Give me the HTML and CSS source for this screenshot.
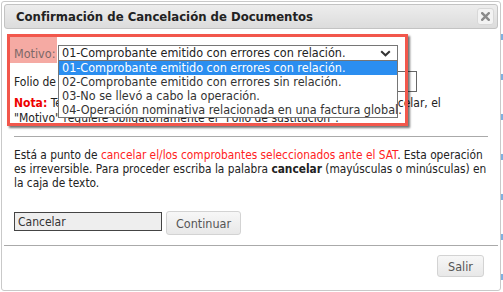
FILE: index.html
```html
<!DOCTYPE html>
<html lang="es">
<head>
<meta charset="utf-8">
<title>Confirmación de Cancelación de Documentos</title>
<link rel="stylesheet" href="styles.css">
</head>
<body>
<div class="dialog">
  <div class="titlebar">
    <span class="title">Confirmación de Cancelación de Documentos</span>
    <button class="close" type="button" aria-label="Cerrar">
      <svg width="9" height="9" viewBox="0 0 9 9"><path d="M1.2 1.2 L7.8 7.8 M7.8 1.2 L1.2 7.8" stroke="#8a8a8a" stroke-width="2.4" stroke-linecap="square"/></svg>
    </button>
  </div>
  <div class="content">
    <div class="form">
      <div class="row row-motivo">
        <span class="label hl">Motivo:</span>
        <div class="select">
          <span class="select-value">01-Comprobante emitido con errores con relación.</span>
          <svg class="chev" width="11" height="7" viewBox="0 0 11 7"><path d="M1.2 1.2 L5.5 5.3 L9.8 1.2" fill="none" stroke="#333" stroke-width="2"/></svg>
          <ul class="listbox">
            <li class="opt sel">01-Comprobante emitido con errores con relación.</li>
            <li class="opt">02-Comprobante emitido con errores sin relación.</li>
            <li class="opt">03-No se llevó a cabo la operación.</li>
            <li class="opt">04-Operación nominativa relacionada en una factura global.</li>
          </ul>
        </div>
      </div>
      <div class="row row-folio">
        <span class="label">Folio de sustitución:</span>
        <input class="folio" type="text">
      </div>
      <p class="nota"><b>Nota:</b> Tenga en cuenta que al seleccionar el motivo 01 para poder cancelar, el<br>"Motivo" requiere obligatoriamente el "Folio de sustitución".</p>
    </div>
    <hr class="sep">
    <p class="msg">Está a punto de <span class="red">cancelar el/los comprobantes seleccionados ante el SAT</span>. Esta operación es irreversible. Para proceder escriba la palabra <b>cancelar</b> (mayúsculas o minúsculas) en la caja de texto.</p>
    <div class="confirm">
      <input class="word" type="text" value="Cancelar">
      <button class="btn" type="button">Continuar</button>
    </div>
  </div>
  <div class="footer">
    <button class="btn btn-salir" type="button">Salir</button>
  </div>
  <div class="annot"></div>
</div>
</body>
</html>
```
FILE: styles.css
```css
html, body {
  margin: 0;
  padding: 0;
}
body {
  width: 503px;
  height: 292px;
  background-color: #fff;
  background-image: repeating-linear-gradient(to bottom, transparent 0 34px, #7fb0e0 34px 40px);
  background-size: 2px 100%;
  background-position: right top;
  background-repeat: no-repeat;
  font-family: "DejaVu Sans Condensed", "DejaVu Sans", sans-serif;
  font-stretch: condensed;
  color: #222;
  overflow: hidden;
}
.dialog {
  position: relative;
  box-sizing: border-box;
  margin: 1px 0 0 1px;
  width: 500px;
  height: 290px;
  border: 1px solid #c9c9c9;
  border-radius: 3px;
  padding: 2px;
  background: #fff;
  display: flex;
  flex-direction: column;
}
.titlebar {
  box-sizing: border-box;
  height: 25px;
  border: 1px solid #c3c3c3;
  border-radius: 3px;
  background: linear-gradient(to bottom, #ededed, #dcdcdc);
  display: flex;
  align-items: center;
  justify-content: space-between;
  padding: 0 3px 0 11px;
}
.title {
  font-weight: bold;
  font-size: 13px;
  color: #222;
}
.close {
  box-sizing: border-box;
  width: 17px;
  height: 17px;
  padding: 0;
  border: 1px solid #d8d8d8;
  border-radius: 3px;
  background: #f3f3f3;
  display: flex;
  align-items: center;
  justify-content: center;
}
.content {
  padding: 7px 10px 10px 10px;
}
.form {
  font-size: 12px;
}
.row {
  display: flex;
}
.row-motivo {
  height: 27px;
}
.label.hl {
  box-sizing: border-box;
  width: 48px;
  margin-left: -5px;
  padding: 10px 0 0 5px;
  background: #f5aaa3;
  color: #7c6868;
  font-size: 12.5px;
}
.select {
  position: relative;
  box-sizing: border-box;
  align-self: flex-end;
  margin: 0 0 2px 1px;
  width: 340px;
  height: 16px;
  border: 1px solid #767676;
  background: #fff;
  font-size: 12.5px;
  line-height: 14px;
  padding-left: 3px;
  color: #222;
  display: flex;
  align-items: center;
}
.select-value {
  flex: 1;
  white-space: nowrap;
}
.chev {
  margin-right: 6px;
}
.listbox {
  position: absolute;
  z-index: 2;
  left: -1px;
  top: 14px;
  box-sizing: border-box;
  width: 340px;
  margin: 0;
  padding: 0;
  list-style: none;
  border: 1px solid #767676;
  background: #fff;
}
.opt {
  height: 14px;
  line-height: 14px;
  padding-left: 3px;
  color: #333;
  white-space: nowrap;
}
.opt.sel {
  background: #2b8ef0;
  color: #fff;
}
.row-folio {
  align-items: center;
  width: 403px;
  padding: 8px 0 4px;
}
.row-folio .label {
  width: 150px;
  color: #222;
}
.folio {
  flex: 1;
  box-sizing: border-box;
  height: 21px;
  margin: 0;
  border: 1px solid #666;
  background: #fff;
}
.nota {
  margin: 0;
  line-height: 15px;
  color: #222;
  white-space: nowrap;
}
.nota b {
  color: #e00;
}
.sep {
  margin: 10px 0 0;
  border: 0;
  border-top: 1px solid #aaa;
  height: 0;
}
.msg {
  margin: 11px 0 0;
  font-size: 11.8px;
  line-height: 14px;
  color: #222;
}
.red {
  color: #f22;
}
.confirm {
  display: flex;
  align-items: flex-start;
  margin-top: 21px;
  gap: 4px;
}
.word {
  box-sizing: border-box;
  width: 148px;
  height: 19px;
  margin: 1px 0 0;
  border: 1px solid #444;
  background: #eee;
  padding: 0 3px;
  font-family: inherit;
  font-stretch: condensed;
  font-size: 12px;
  color: #333;
}
.btn {
  box-sizing: border-box;
  height: 24px;
  padding: 0 8px;
  border: 1px solid #d3d3d3;
  border-radius: 3px;
  background: linear-gradient(to bottom, #f7f7f7, #e8e8e8);
  font-family: inherit;
  font-stretch: condensed;
  font-size: 12.5px;
  color: #555;
}
.confirm .btn {
  width: 75px;
}
.footer {
  flex: 1;
  border-top: 1px solid #aaa;
  display: flex;
  justify-content: flex-end;
  align-items: flex-start;
  padding: 9px 14px 0 0;
}
.btn-salir {
  width: 47px;
  height: 22px;
}
.annot {
  position: absolute;
  z-index: 3;
  left: 5px;
  top: 32px;
  box-sizing: border-box;
  width: 401px;
  height: 92px;
  border: 3.5px solid #f2574c;
  box-shadow: 2px 2px 2px rgba(0, 0, 0, 0.55);
  pointer-events: none;
}
```
